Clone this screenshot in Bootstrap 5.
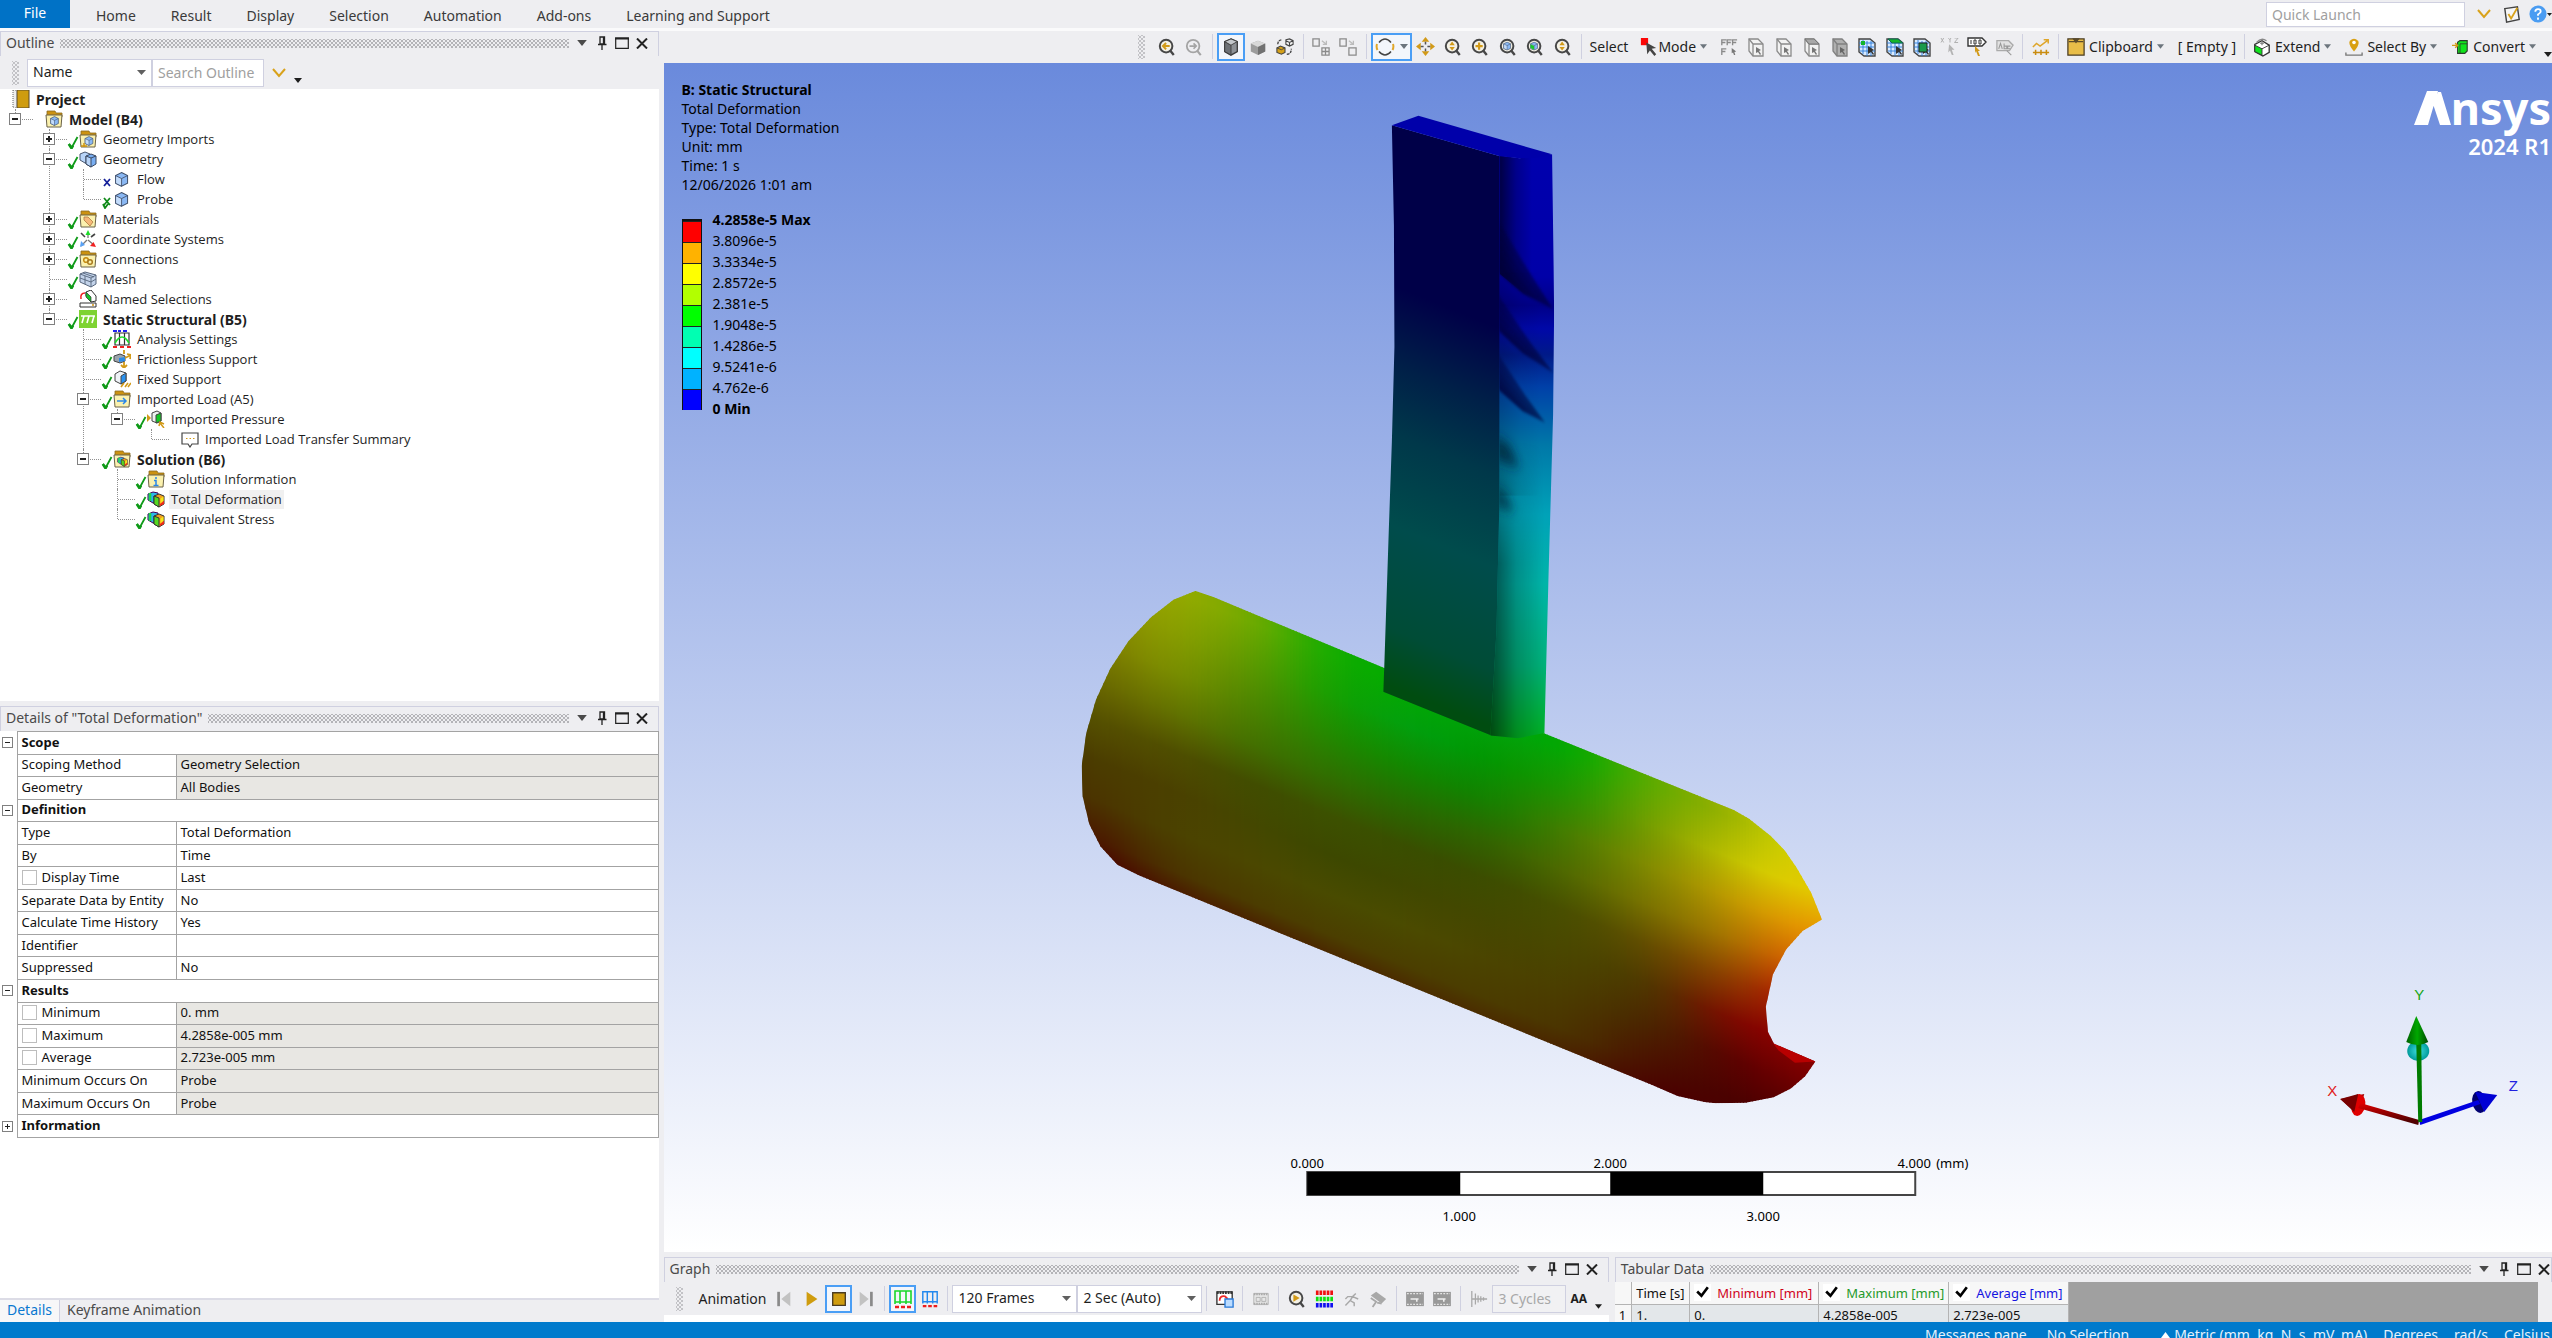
<!DOCTYPE html>
<html lang="en">
<head>
<meta charset="utf-8">
<meta name="viewport" content="width=device-width, initial-scale=1">
<title>Static Structural - Mechanical</title>
<link href="https://cdn.jsdelivr.net/npm/bootstrap@5.3.0/dist/css/bootstrap.min.css" rel="stylesheet">
<style>
:root { --chrome:#eeeef1; --edge:#cfd0e0; --gold:#cc9a10; --sel:#4a9ef5; }
body { font-family:"Noto Sans","Open Sans",sans-serif; font-size:14px; line-height:20px; color:#1e1e1e; background:var(--chrome); }
svg { display:block; flex:none; }
button { border:0; background:none; padding:0; color:inherit; }
.ribbon { height:28px; }
.ribbon nav { padding-left:8px; }
.ribbon-line { height:3px; background:#fafafb; flex:none; }
.file-btn { width:70px; background:#0072c6; color:#fff; padding-bottom:2px; }
.menu-btn { padding:3px 17px 0 18px; color:#3a3a3a; }
.quick { width:199px; height:25px; margin-top:1px; }
.field { border:1px solid var(--edge); background-color:#fff; border-radius:0; padding:0 5px 1px; font-size:14px; line-height:20px; color:#1e1e1e; outline:0; }
.field::placeholder { color:#a0a0a0; opacity:1; }
select.field { appearance:none; background-image:url("data:image/svg+xml,%3Csvg xmlns='http://www.w3.org/2000/svg' viewBox='0 0 9 5'%3E%3Cpath fill='%23606060' d='M0 0h9L4.500 5z'/%3E%3C/svg%3E"); background-repeat:no-repeat; background-size:9px 5px; background-position:right 5px center; }
.left-col { width:26%; padding-right:5px; gap:5px; }
.outline-pane { flex:335 1 0; min-height:0; }
.details-pane { flex:308 1 0; min-height:0; }
.pane-title { height:25px; border:1px solid var(--edge); border-bottom:0; padding:0 9px 2px 5px; color:#4a4a4a; flex:none; }
.dots { height:9px; margin:1px 0 0 6px; flex:1; background-image:radial-gradient(circle,#b4b4b8 0 1px,transparent 1px),radial-gradient(circle,#b4b4b8 0 1px,transparent 1px); background-size:4px 4px; background-position:0 0,2px 2px; }
.grip { width:7px; height:24px; flex:none; background-image:radial-gradient(circle,#c2c2c6 0 1px,transparent 1px),radial-gradient(circle,#c2c2c6 0 1px,transparent 1px); background-size:4px 4px; background-position:0 0,2px 2px; }
.title-btn { width:14px; height:20px; margin-left:6px; display:flex; align-items:center; justify-content:center; }
.search-row { height:33px; padding-left:12px; flex:none; }
.search-field { height:28px; width:112px; }
.anim-select { width:125px; height:28px; }
.tree-box { background:#fff; }
.tree, .tree ul { list-style:none; margin:0; padding:0; }
.tree { font-family:"Open Sans","Noto Sans",sans-serif; font-size:13px; }
.tree .fw-bold { font-size:14px; font-family:"Noto Sans","Open Sans",sans-serif; }
.tree ul { padding-left:34px; }
.tree > li > ul { padding-left:0; }
.tree li { position:relative; }
.tree li li::before { content:""; position:absolute; left:15px; top:0; bottom:0; border-left:1px dotted #909090; }
.tree li li:last-child::before { bottom:auto; height:10px; }
.tree-row { display:flex; align-items:center; height:20px; padding-left:9px; white-space:nowrap; }
.root-row { padding-left:12px; }
.twig { width:12px; height:12px; margin-right:1px; position:relative; z-index:1; border:1px solid #808080; background:#fff; flex:none; padding:0; }
.twig::before { content:""; position:absolute; left:2px; top:4px; width:6px; height:2px; background:#222; }
.twig.plus::after { content:""; position:absolute; left:4px; top:2px; width:2px; height:6px; background:#222; }
.dash { width:11px; border-top:1px dotted #909090; flex:none; }
.leaf-gap { width:7px; flex:none; }
.leaf-dash { width:17px; }
.mark-slot { width:12px; height:20px; flex:none; padding-top:6px; }
.node-name { margin-left:4px; padding:0 2px; line-height:19px; }
.node-on { background:#f0f0f0; }
.details-box { background:#fff; }
.prop-table { width:100%; height:407px; border-collapse:collapse; font-size:13px; line-height:16px; table-layout:fixed; color:#111; }
.prop-table th, .prop-table td { border:1px solid #a3a3a3; padding:0 4px 2px; white-space:nowrap; font-weight:400; text-align:left; }
.prop-table .tw { border:0; padding:0 0 0 2px; width:17px; }
.prop-table .grp { font-weight:700; }
.prop-table .ro { background:#e8e7e3; }
.prop-table .twig { width:11px; height:11px; display:block; }
.prop-table .twig::before { top:4px; height:1px; left:2px; width:5px; }
.prop-table .twig.plus::after { width:1px; height:5px; }
.twig-col { width:17px; }
.key-col { width:159px; }
.tick { appearance:none; width:15px; height:15px; margin:0 5px 0 0; border:1px solid #bdbdbd; background:#fff; vertical-align:-3px; }
.foot-tabs { height:24px; border-top:2px solid #dcdce6; flex:none; }
.foot-tab { padding:0 7px 2px; color:#4a4a4a; }
.foot-tab.on { background:#f7f7f8; color:#0a78d0; border-right:1px solid var(--edge); }
.toolbar-main { height:32px; flex:none; padding-bottom:1px; }
.tb { width:27px; height:28px; display:flex; align-items:center; justify-content:center; flex:none; }
.tb-wide { width:28px; }
.tb.picked, .pick-wide { border:2px solid var(--sel); background:#f3f6fb; }
.pick-wide { width:41px; height:28px; display:flex; align-items:center; justify-content:space-between; padding:0 2px; }
.vr-thin { width:1px; height:25px; background:var(--edge); margin:0 4px; flex:none; }
.txt-btn { display:flex; align-items:center; white-space:nowrap; flex:none; }
.far { margin-left:14px; }
.view3d { background:linear-gradient(#6a8adc,#ffffff); min-height:0; color:#000; }
.model-svg { position:absolute; inset:0; width:100%; height:100%; }
.hud { position:absolute; left:18px; top:17px; line-height:19px; }
.legend-row { margin-top:15px; }
.legend-bar { width:20px; margin-top:10px; border:1px solid #111; border-width:2px 1px; height:191px; }
.legend-bar span { display:block; height:21px; border-top:1px solid #222; }
.legend-labels { line-height:21px; margin-left:11px; }
.brand { position:absolute; right:0; top:20px; width:140px; height:80px; }
.bottom-row { height:70px; padding-top:5px; gap:6px; flex:none; }
.graph-pane { flex:945 1 0; min-width:0; }
.tabular-pane { flex:937 1 0; min-width:0; }
.anim-bar { height:33px; flex:none; padding-left:12px; }
.cycle-field { width:74px; height:28px; background:#f1f1f3; color:#a8a8a8; }
.aa-label { font-size:12px; }
.grid-box { background:#a0a0a0; margin-right:14px; overflow:hidden; }
.data-table { border-collapse:collapse; font-size:13px; line-height:18px; color:#111; }
.data-table th, .data-table td { border:1px solid #b4b4b4; border-width:0 1px 1px 0; font-weight:400; padding:0 4px; white-space:nowrap; height:22px; background:#e3e7ea; }
.data-table th { background:#f7f7f7; }
.data-table .c-min { color:#d0021b; } .data-table .c-max { color:#1f9a2a; } .data-table .c-avg { color:#1414e0; }
.data-check { appearance:none; width:17px; height:17px; margin:0 6px 0 0; background:#fff; vertical-align:-3px; border:0; background-image:url("data:image/svg+xml,%3Csvg xmlns='http://www.w3.org/2000/svg' viewBox='0 0 16 16'%3E%3Cpath fill='none' stroke='%23000' stroke-width='2.500' d='M3 7l4 4 6-8'/%3E%3C/svg%3E"); }
.status { height:16px; background:#007acc; color:#e6f2fb; line-height:26px; flex:none; gap:16px; white-space:nowrap; padding-right:2px; }
.status-up { margin:10px 4px 0 0; }
</style>
</head>
<body class="d-flex flex-column vh-100 overflow-hidden">

<svg width="0" height="0" class="position-absolute" aria-hidden="true">
<defs>
<symbol id="caret" viewBox="0 0 8 5"><path d="M0 0h8L4 5z" fill="currentColor"/></symbol>
<symbol id="chev" viewBox="0 0 14 10"><path d="M1 1l6 7 6-7" fill="none" stroke="#d9a21b" stroke-width="2"/></symbol>
<symbol id="pin" viewBox="0 0 10 14"><path d="M3 1h4.500v7H3zM1 8.500h8.500M5 9v5M6.500 1v7" fill="none" stroke="#222" stroke-width="1.300"/></symbol>
<symbol id="maxi" viewBox="0 0 14 12"><path d="M.7 1h12.600v10.300H.7z" fill="none" stroke="#222" stroke-width="1.200"/><path d="M0 1.500h14" stroke="#222" stroke-width="2"/></symbol>
<symbol id="close" viewBox="0 0 12 11"><path d="M1 .5l10 10M11 .5l-10 10" stroke="#222" stroke-width="2"/></symbol>
<symbol id="ok" viewBox="0 0 12 14"><path d="M2 9l2.500 4L10.500 2" fill="none" stroke="#0f9a18" stroke-width="1.800"/><path d="M1.800 9l2.700 4.200 1.500-2.600" fill="none" stroke="#0f9a18" stroke-width="2.600"/></symbol>
<symbol id="xblue" viewBox="0 0 12 14"><path d="M3 4l6 7M9 4l-6 7" stroke="#15209a" stroke-width="1.800"/></symbol>
<symbol id="xgreen" viewBox="0 0 12 14"><path d="M3 3l6 7M9 3l-6 7M2 9l2 4 3-4" fill="none" stroke="#0f8a18" stroke-width="1.800"/></symbol>
<symbol id="book" viewBox="0 0 18 18"><path d="M5 0h12v18H5z" fill="#cf9c0f" stroke="#5a4a2a"/><path d="M1 0h3.500v18H1z" fill="#eee" stroke="#666" stroke-dasharray="1 1"/></symbol>
<symbol id="folder" viewBox="0 0 18 18"><path d="M2 5V1h8l1 2h6v4H2z" fill="#cc9210" stroke="#8a6a20" stroke-width=".8"/><path d="M1 5h16l-1 12H2z" fill="#fbf1ae" stroke="#6a6248"/></symbol>
<symbol id="cube" viewBox="0 0 18 18"><path d="M9 1l7 3.500v9L9 17l-7-3.500v-9z" fill="#8ab8f4" stroke="#40506a" stroke-width="1.200"/><path d="M2 4.500L9 8v9l-7-3.500z" fill="#c3dcfb" stroke="#40506a"/><path d="M9 8l7-3.500" stroke="#40506a"/></symbol>
<symbol id="part" viewBox="-1 -2 21 21"><use href="#cube" width="18" height="18"/></symbol>
<symbol id="cubes" viewBox="0 0 18 18"><path d="M6 2l5 2v8l-5 1-5-3V4z" fill="#b8d4f8" stroke="#4a5870"/><path d="M12 4l5 2v8l-5 3-5-3V6z" fill="#79aef2" stroke="#3a4860"/><path d="M7 6l5 2v9l-5-3z" fill="#b8d4f8" stroke="#3a4860"/><path d="M12 8l5-2" stroke="#3a4860"/></symbol>
<symbol id="f-import" viewBox="0 0 18 18"><use href="#folder"/><use href="#cube" x="5" y="6" width="10" height="10"/><path d="M2 16h6M5 13v4" stroke="#cc9210" stroke-width="1.500"/></symbol>
<symbol id="f-model" viewBox="0 0 18 18"><use href="#folder"/><use href="#cube" x="4.500" y="6" width="10" height="10"/></symbol>
<symbol id="f-mat" viewBox="0 0 18 18"><use href="#folder"/><path d="M5 7l4 0 5 5-3 4-6-6z" fill="#f5b87a" stroke="#b07a40" stroke-width=".8"/></symbol>
<symbol id="axes" viewBox="0 0 18 18"><path d="M9 8V2M9 10l6 5M8 10l-6 6" stroke="#777" stroke-width="1.300"/><path d="M9 0l2.500 5h-5z" fill="#1ddc2a"/><path d="M17 17l-6-1 3.500-4z" fill="#f02020"/><path d="M1 17l1-6 4 4z" fill="#5aa2f5"/><path d="M2 3l4 4M16 4l-4 3" stroke="#444" stroke-width="1.600"/></symbol>
<symbol id="f-conn" viewBox="0 0 18 18"><use href="#folder"/><circle cx="7" cy="10" r="2.300" fill="none" stroke="#c58a10" stroke-width="1.500"/><circle cx="11" cy="12" r="2.300" fill="none" stroke="#a87a20" stroke-width="1.500"/></symbol>
<symbol id="mesh" viewBox="0 0 18 18"><path d="M6 2l11 3v9l-5 3L1 12V4z" fill="#c3d3ea" stroke="#56657c"/><path d="M1 4l11 4 5-3M12 8v9M6 6v8M1 8l11 4 5-3M4 3l11 4" fill="none" stroke="#56657c" stroke-width=".9"/></symbol>
<symbol id="named" viewBox="0 0 18 18"><path d="M7 2l5-2 5 6v5l-5 1-5-6z" fill="#fff" stroke="#333"/><path d="M7 2l5 5v5L7 7z" fill="#17c22a" stroke="#333" stroke-width=".7"/><path d="M2 9q-1-6 4-6" fill="none" stroke="#ee2020" stroke-width="1.500"/><path d="M1 13h16v4H1z" fill="#fff" stroke="#333"/><circle cx="14" cy="15" r="1" fill="#cc9210"/></symbol>
<symbol id="static" viewBox="0 0 18 18"><path d="M0 0h18v18H0z" fill="#7ed332"/><path d="M2 6h14M5 6l-2 7M10 6l-2 7M15 6l-2 7" stroke="#fff" stroke-width="1.600"/></symbol>
<symbol id="analysis" viewBox="0 0 18 18"><path d="M2 3h14v12H2zM6.500 3v12M11.500 3v12" fill="none" stroke="#333" stroke-width="1.200"/><path d="M2 13q7-12 14 0" fill="none" stroke="#1ddc2a" stroke-width="1.600"/><path d="M0 1h4M5 1h3M10 1h4" stroke="#2020ee" stroke-width="2"/><path d="M0 17h4M7 17h4M14 17h4" stroke="#ee2020" stroke-width="2"/></symbol>
<symbol id="friction" viewBox="0 0 18 18"><path d="M1 6l6-2 5 2v5l-5 2-6-2z" fill="#9aa4ac" stroke="#444"/><path d="M6 8l6-1v4l-6 1z" fill="#2a8ae8"/><path d="M11 0v4M11 12v6M8 15l3 3 3-3M12 8l6-3M14 4l4 1-1 4" fill="none" stroke="#d29a18" stroke-width="1.800"/></symbol>
<symbol id="fixed" viewBox="0 0 18 18"><path d="M2 4l5-3 6 2v8l-5 3-6-3z" fill="#eef2f6" stroke="#444"/><path d="M8 6l5-3v8l-5 3z" fill="#2a92f0" stroke="#444"/><path d="M8 17l3-4M12 17l3-4M15 17l3-4" stroke="#d29a18" stroke-width="1.600"/></symbol>
<symbol id="f-load" viewBox="0 0 18 18"><use href="#folder"/><path d="M4 11h9M10 8l3 3-3 3" fill="none" stroke="#2a86e8" stroke-width="1.500"/></symbol>
<symbol id="pressure" viewBox="0 0 18 18"><path d="M5 3l5-2 4 2v8l-4 2-5-2z" fill="#eef2f0" stroke="#444"/><path d="M9 5l5-2v8l-5 2z" fill="#13c926" stroke="#444"/><path d="M0 4l4 4-4 4z" fill="#d29a18"/><path d="M17 18l-4-5M12 16l1-4 4 2" fill="none" stroke="#d29a18" stroke-width="1.500"/></symbol>
<symbol id="note" viewBox="0 0 18 18"><path d="M1 3h16v11h-6l-2 3-2-3H1z" fill="#fff" stroke="#444" stroke-width="1.200"/><path d="M5 8.500h9" stroke="#d29a18" stroke-dasharray="1.500 2"/></symbol>
<symbol id="result" viewBox="0 0 18 18"><path d="M6 2l5 1v9l-5 1-5-3V4z" fill="#2db6e8" stroke="#405"/><path d="M3 3v8" stroke="#1fd64a" stroke-width="2.500"/><path d="M12 4l5 2v8l-5 3-5-3V6z" fill="#f0a020" stroke="#333"/><path d="M7 6l5 2v9l-5-3z" fill="#54d820" stroke="#333"/><path d="M13.500 8.500l3-2v4l-3 3z" fill="#f6e81a"/><path d="M13 14l4-3v3l-4 2z" fill="#ee2a1a"/></symbol>
<symbol id="f-sol" viewBox="0 0 18 18"><use href="#folder"/><use href="#result" x="4" y="6" width="11" height="11"/></symbol>
<symbol id="f-info" viewBox="0 0 18 18"><use href="#folder"/><path d="M9 7v2M7 10.500h2V15M6.500 15.500h5" fill="none" stroke="#2a86e8" stroke-width="1.500"/></symbol>

<symbol id="lens" viewBox="0 0 20 20"><circle cx="9" cy="9" r="7" fill="#f4f1e6" stroke="#474747" stroke-width="2.200"/><path d="M13.500 14l4 5" stroke="#474747" stroke-width="2.600"/></symbol>
<symbol id="z-back" viewBox="0 0 20 20"><use href="#lens"/><path d="M13 9H6M9 5.500L5.500 9 9 12.500" fill="none" stroke="#d29a18" stroke-width="2.200"/></symbol>
<symbol id="z-fwd" viewBox="0 0 20 20"><g fill="none" stroke="#a4a4a4"><circle cx="9" cy="9" r="7" stroke-width="2"/><path d="M13.500 14l4 5" stroke-width="2.400"/><path d="M5 9h7M9.500 6L12.500 9l-3 3" stroke-width="1.800"/></g></symbol>
<symbol id="z-pan" viewBox="0 0 20 20"><use href="#lens"/><path d="M9 4l3 4H6zM9 14l3-4H6z" fill="#d29a18"/></symbol>
<symbol id="z-plus" viewBox="0 0 20 20"><use href="#lens"/><path d="M9 5v8M5 9h8" stroke="#d29a18" stroke-width="2.400"/></symbol>
<symbol id="z-cube" viewBox="0 0 20 20"><use href="#lens"/><use href="#cube" x="4" y="4" width="10" height="10"/></symbol>
<symbol id="z-green" viewBox="0 0 20 20"><use href="#lens"/><use href="#cube" x="4" y="4" width="10" height="10"/><path d="M5 7l4 2v4l-4-2z" fill="#19c92c"/></symbol>
<symbol id="c-dark" viewBox="0 0 20 20"><path d="M10 1l7 3v11l-7 4-7-4V4z" fill="#8d9196" stroke="#3d3d3d" stroke-width="1.500"/><path d="M3 4l7 4v11l-7-4z" fill="#6d7176" stroke="#3d3d3d"/><path d="M10 8l7-4-7-3-7 3z" fill="#c4c8cc" stroke="#3d3d3d"/></symbol>
<symbol id="c-flat" viewBox="0 0 20 20"><path d="M2 6l8-3 8 3v9l-8 4-8-4z" fill="#9c9c9c"/><path d="M2 6l8-3 8 3-8 4z" fill="#d8d8d8"/><path d="M10 10l8-4v9l-8 4z" fill="#717171"/></symbol>
<symbol id="c-swap" viewBox="0 0 20 20"><path d="M11 2l4-1 4 2v4l-4 2-4-2zM11 3l4 2 4-2M15 5v4" fill="#f2f2f2" stroke="#444" stroke-width="1.200"/><path d="M1 11l4-2 5 2v5l-4 2-5-2z" fill="#d6a118" stroke="#444" stroke-width="1.200"/><path d="M1 11l5 2 4-2" fill="none" stroke="#444"/><path d="M2 7q0-5 5-5M12 18q5 0 5-6" fill="none" stroke="#444" stroke-width="1.500" stroke-dasharray="3 1"/></symbol>
<symbol id="sq-grid" viewBox="0 0 20 20"><g fill="none" stroke="#8a8a8a" stroke-width="1.400"><path d="M1 1h7v8H1zM11 11h8v8h-8zM15 11v8M11 15h8"/><path d="M11 3l5 4M16 3v4h-4" stroke="#bbb"/></g></symbol>
<symbol id="sq-one" viewBox="0 0 20 20"><g fill="none" stroke="#8a8a8a" stroke-width="1.400"><path d="M1 1h7v8H1zM11 11h8v8h-8z"/><path d="M11 3l5 4M16 3v4h-4" stroke="#bbb"/></g></symbol>
<symbol id="orbit" viewBox="0 0 20 20"><g fill="none" stroke="#444" stroke-width="1.500"><path d="M4 5.500Q10-1.500 16 5.500M16 14.500Q10 21.500 4 14.500"/></g><path d="M2 7q-1 3 .5 6M18 7q1 3-.5 6" fill="none" stroke="#e0a72a" stroke-width="2"/></symbol>
<symbol id="move" viewBox="0 0 20 20"><path d="M10 0l4 5H6zM10 20l4-5H6zM0 10l5-4v8zM20 10l-5-4v8z" fill="#d29a18"/><path d="M10 5v3M10 12v3M5 10h3M12 10h3" stroke="#555" stroke-width="1.600"/></symbol>
<symbol id="mode" viewBox="0 0 20 20"><path d="M1 0h8v8H1z" fill="#fb0606"/><path d="M7 5l11 6-5 1 5 6-2 2-5-6-3 4z" fill="#444"/></symbol>
<symbol id="filter" viewBox="0 0 20 20"><path d="M2 19V12h5M2 15h4M2 8V2h5M2 5h4M8 8V2h5M8 5h4M14 8V2h5M14 5h4" fill="none" stroke="#8a8a8a" stroke-width="1.500"/><path d="M13 11l5 4-2 .5 1 3.500h-1.500l-1-3-1.500 1z" fill="#777"/></symbol>
<symbol id="pick" viewBox="0 0 20 20"><path d="M3 2h9l5 5v12H7l-4-5z" fill="#f2f2f2" stroke="#8a8a8a" stroke-width="1.300"/><path d="M3 2l4 5h10M7 7v12" fill="none" stroke="#8a8a8a" stroke-width="1.300"/><path d="M10 10l5 3-2 1 2 3-1 1-2-3-2 1z" fill="#777"/></symbol>
<symbol id="pick-top" viewBox="0 0 20 20"><use href="#pick"/><path d="M3 2h9l5 5H7z" fill="#a8a8a8" stroke="#777"/></symbol>
<symbol id="pick-full" viewBox="0 0 20 20"><path d="M3 2h9l5 5v12H7l-4-5z" fill="#b0b0b0" stroke="#808080" stroke-width="1.300"/><path d="M3 2l4 5h10M7 7v12" fill="none" stroke="#808080" stroke-width="1.300"/><path d="M10 10l5 3-2 1 2 3-1 1-2-3-2 1z" fill="#666"/></symbol>
<symbol id="gridpick" viewBox="0 0 20 20"><path d="M2 2h11l5 4v13H7l-5-4z" fill="#d8eaff" stroke="#444" stroke-width="1.400"/><path d="M6 3v14M10 4v15M14 4v15M2 6h15M2 10h15M3 14h15" stroke="#2a7ad8" stroke-width=".9"/><path d="M11 9l6 4-2 1 2 3-1 1-2-3-3 2z" fill="#333"/></symbol>
<symbol id="g1" viewBox="0 0 20 20"><use href="#gridpick"/><path d="M4 4h4v4H4z" fill="#13b52a"/></symbol>
<symbol id="g2" viewBox="0 0 20 20"><use href="#gridpick"/><path d="M3 2h10l5 4H7z" fill="#13b52a" stroke="#165" /></symbol>
<symbol id="g3" viewBox="0 0 20 20"><use href="#gridpick"/><path d="M7 6h8v9H7z" fill="#1a9a4a" stroke="#222"/></symbol>
<symbol id="xyz" viewBox="0 0 20 20"><path d="M0 0l3 5M3 0L0 5M8 0l2 2 1-2M10 2v3M15 0h4l-4 5h4" fill="none" stroke="#b0b0b0" stroke-width="1.100"/><path d="M9 7l6 6-3 0 2 6h-2l-2-5-2 2z" fill="#b4b4b4"/></symbol>
<symbol id="tag" viewBox="0 0 20 20"><path d="M1 1h14l4 4-4 4H1z" fill="#fff" stroke="#333" stroke-width="1.400"/><path d="M4 3v4M7 3h2v4H7zM12 3h2v4h-2z" stroke="#333" fill="none"/><path d="M8 9l5 5-2 0 2 5h-2l-2-5-1 2z" fill="#d29a18"/></symbol>
<symbol id="tag-off" viewBox="0 0 20 20"><path d="M1 3h13l5 5-4 6H1z" fill="#e2e2e2" stroke="#aaa" stroke-width="1.400"/><path d="M3 12l2-6 2 6M9 6v6h3V9H9M16 9h-3v3h3M12 14l5 5" fill="none" stroke="#999" stroke-width="1.200"/></symbol>
<symbol id="trend" viewBox="0 0 20 20"><path d="M1 10l4-4 4 3 8-6M13 2h5v4" fill="none" stroke="#dfa62a" stroke-width="1.700"/><path d="M1 16h18M4 13v6M10 13v6M16 13v6" stroke="#c98c10" stroke-width="1.700"/></symbol>
<symbol id="clip" viewBox="0 0 20 20"><path d="M1 1h18v18H1z" fill="#e8bd48" stroke="#4a3c22" stroke-width="1.400"/><path d="M2 4h16M7 1h6l-3 4z" stroke="#5a4a2a" fill="#5a4a2a" stroke-width="1.200"/></symbol>
<symbol id="extend" viewBox="0 0 20 20"><path d="M10 3l8 5v8l-7 4-9-5V7z" fill="#fff" stroke="#333" stroke-width="1.500"/><path d="M2 8l8 4v7l-8-4z" fill="#0fe31c" stroke="#333"/><path d="M4 5q5-6 11-2M10 4v4M8 6h4" stroke="#888" fill="none" stroke-width="1.500"/><path d="M10 12l8-4" stroke="#333"/></symbol>
<symbol id="place" viewBox="0 0 20 20"><path d="M10 15Q3 7 5.500 3 10-1.500 14.500 3 17 7 10 15z" fill="#d9a012"/><circle cx="10" cy="5" r="2" fill="#fff"/><path d="M1 16v3h18v-3" fill="none" stroke="#777" stroke-width="1.500"/></symbol>
<symbol id="convert" viewBox="0 0 20 20"><path d="M7 4l3-2h9v13l-3 3H7z" fill="#0fe31c" stroke="#2b3b2b" stroke-width="1.400"/><path d="M10 6h9M10 6v12" stroke="#2b3b2b"/><path d="M0 8h7M4 5l3 3-3 3" fill="none" stroke="#d29a18" stroke-width="1.800"/></symbol>
<symbol id="doc" viewBox="0 0 20 20"><path d="M2 4l14-2 2 14-14 3z" fill="#f6f6f6" stroke="#444" stroke-width="1.600"/><path d="M6 10l3 5 7-12" fill="none" stroke="#d9a21b" stroke-width="2"/></symbol>
<symbol id="help" viewBox="0 0 20 20"><circle cx="10" cy="10" r="9.500" fill="#4a9cf2"/><path d="M7 7.500q0-3 3-3t3 2.500q0 2-3 3.500v1.500M10 14v2.500" fill="none" stroke="#fff" stroke-width="2"/></symbol>
<symbol id="a-prev" viewBox="0 0 20 20"><path d="M4 2v16" stroke="#8a8a8a" stroke-width="3"/><path d="M17 2v16L7 10z" fill="#c2c2c2"/></symbol>
<symbol id="a-next" viewBox="0 0 20 20"><path d="M16 2v16" stroke="#8a8a8a" stroke-width="3"/><path d="M3 2v16l10-8z" fill="#c2c2c2"/></symbol>
<symbol id="a-play" viewBox="0 0 20 20"><path d="M4 2v16l12-8z" fill="#cf9c0f"/></symbol>
<symbol id="a-stop" viewBox="0 0 20 20"><path d="M3 3h14v14H3z" fill="#cf9c0f" stroke="#4a3c22" stroke-width="1.500"/></symbol>
<symbol id="a-green" viewBox="0 0 20 20"><path d="M2 2h16v11H2zM7 2v13M13 2v13M2 13v2M18 13v2" fill="none" stroke="#19d82a" stroke-width="1.600"/><path d="M2 18h16" stroke="#ee1c1c" stroke-width="2.500" stroke-dasharray="4 2"/></symbol>
<symbol id="a-blue" viewBox="0 0 20 20"><path d="M2 2h16v11H2zM7 2v13M13 2v13M2 13v2M18 13v2" fill="none" stroke="#2288ee" stroke-width="1.600"/><path d="M2 18h16" stroke="#ee1c1c" stroke-width="2.500" stroke-dasharray="4 2"/></symbol>
<symbol id="a-film" viewBox="0 0 20 20"><path d="M1 2h17v14H1z" fill="#fff" stroke="#333" stroke-width="1.500"/><path d="M1 3h17" stroke="#333" stroke-width="3" stroke-dasharray="2 1"/><path d="M4 12q0-6 6-5l3 3" fill="none" stroke="#ee2a2a" stroke-width="2"/><path d="M10 10h9v9h-9z" fill="#bcdcff" stroke="#2a7ad8" stroke-width="1.500"/></symbol>
<symbol id="a-filmoff" viewBox="0 0 20 20"><path d="M1 3h18v14H1z" fill="#e6e6e6" stroke="#aaa"/><path d="M1 4h18M1 16h18" stroke="#aaa" stroke-width="2.500" stroke-dasharray="2 1"/><path d="M4 8h5v5H4zM11 8h5v5h-5z" fill="none" stroke="#aaa"/></symbol>
<symbol id="a-lens" viewBox="0 0 20 20"><use href="#lens"/><path d="M6 5v8l7-4z" fill="#d29a18"/></symbol>
<symbol id="a-rgb" viewBox="0 0 20 20"><g stroke-width="5" stroke-dasharray="3 1"><path d="M1 3h19" stroke="#f01010"/><path d="M1 10h19" stroke="#10e010"/><path d="M1 17h19" stroke="#1010f0"/></g></symbol>
<symbol id="a-run" viewBox="0 0 20 20"><path d="M16 3l-4 4H6l-3 3M12 7l-3 5 5 3v4M9 12l-6 6M12 7l7 3" fill="none" stroke="#a8a8a8" stroke-width="1.800"/></symbol>
<symbol id="a-cam" viewBox="0 0 20 20"><path d="M2 6l6-4 11 8-5 5z" fill="#a8a8a8"/><path d="M2 9l6 4-4 6M9 14l5 1" stroke="#a8a8a8" fill="none" stroke-width="2"/></symbol>
<symbol id="a-key" viewBox="0 0 20 18"><path d="M0 1h20v16H0z" fill="#999"/><path d="M1 3h18M1 15h18" stroke="#e6e6e6" stroke-width="1.500" stroke-dasharray="2 1.500"/><path d="M5 9h9M12 9v3" stroke="#eee" stroke-width="1.800"/></symbol>
<symbol id="a-wave" viewBox="0 0 20 20"><path d="M2 1v18M2 10h17M6 4v12M9 6v8M12 7v6M15 8v4" stroke="#a8a8a8" stroke-width="1.400"/></symbol>
</defs>
</svg>

<header class="d-flex ribbon flex-shrink-0">
  <button class="file-btn">File</button>
  <nav class="d-flex">
    <button class="menu-btn">Home</button><button class="menu-btn">Result</button><button class="menu-btn">Display</button><button class="menu-btn">Selection</button><button class="menu-btn">Automation</button><button class="menu-btn">Add-ons</button><button class="menu-btn">Learning and Support</button>
  </nav>
  <div class="d-flex align-items-center ms-auto gap-2">
    <input class="field quick" placeholder="Quick Launch" aria-label="Quick Launch">
    <button class="ms-1" aria-label="Expand"><svg width="14" height="10"><use href="#chev"/></svg></button>
    <button class="ms-1" aria-label="Options"><svg width="18" height="18"><use href="#doc"/></svg></button>
    <button class="d-flex align-items-center" aria-label="Help"><svg width="18" height="18"><use href="#help"/></svg><svg width="5" height="5"><use href="#caret"/></svg></button>
  </div>
</header>
<div class="ribbon-line"></div>

<main class="d-flex flex-grow-1 overflow-hidden">
  <div class="left-col d-flex flex-column flex-shrink-0">
    <section class="outline-pane d-flex flex-column">
      <div class="pane-title d-flex align-items-center"><span>Outline</span><span class="dots"></span>
        <button class="title-btn" aria-label="Menu"><svg width="10" height="6"><use href="#caret"/></svg></button><button class="title-btn" aria-label="Pin"><svg width="10" height="14"><use href="#pin"/></svg></button><button class="title-btn" aria-label="Maximize"><svg width="14" height="12"><use href="#maxi"/></svg></button><button class="title-btn" aria-label="Close"><svg width="12" height="11"><use href="#close"/></svg></button></div>
      <div class="search-row d-flex align-items-center">
        <span class="grip me-2"></span>
        <select class="field anim-select" aria-label="Filter by"><option>Name</option></select>
        <input class="field search-field" placeholder="Search Outline" aria-label="Search Outline">
        <button class="ms-2" aria-label="Expand"><svg width="14" height="10"><use href="#chev"/></svg></button>
        <svg class="ms-2 mt-3" width="8" height="5"><use href="#caret"/></svg>
      </div>
      <div class="tree-box flex-grow-1 overflow-hidden" id="outlineTree"></div>
    </section>

    <section class="details-pane d-flex flex-column">
      <div class="pane-title d-flex align-items-center"><span>Details of "Total Deformation"</span><span class="dots"></span>
        <button class="title-btn" aria-label="Menu"><svg width="10" height="6"><use href="#caret"/></svg></button><button class="title-btn" aria-label="Pin"><svg width="10" height="14"><use href="#pin"/></svg></button><button class="title-btn" aria-label="Maximize"><svg width="14" height="12"><use href="#maxi"/></svg></button><button class="title-btn" aria-label="Close"><svg width="12" height="11"><use href="#close"/></svg></button></div>
      <div class="details-box flex-grow-1 overflow-hidden">
        <table class="prop-table">
          <colgroup><col class="twig-col"><col class="key-col"><col></colgroup>
          <tbody>
          <tr><td class="tw"><button class="twig" aria-label="Collapse"></button></td><th class="grp" colspan="2">Scope</th></tr>
          <tr><td class="tw"></td><th>Scoping Method</th><td class="ro">Geometry Selection</td></tr>
          <tr><td class="tw"></td><th>Geometry</th><td class="ro">All Bodies</td></tr>
          <tr><td class="tw"><button class="twig" aria-label="Collapse"></button></td><th class="grp" colspan="2">Definition</th></tr>
          <tr><td class="tw"></td><th>Type</th><td>Total Deformation</td></tr>
          <tr><td class="tw"></td><th>By</th><td>Time</td></tr>
          <tr><td class="tw"></td><th><input class="tick" type="checkbox" id="k1"><label for="k1">Display Time</label></th><td>Last</td></tr>
          <tr><td class="tw"></td><th>Separate Data by Entity</th><td>No</td></tr>
          <tr><td class="tw"></td><th>Calculate Time History</th><td>Yes</td></tr>
          <tr><td class="tw"></td><th>Identifier</th><td></td></tr>
          <tr><td class="tw"></td><th>Suppressed</th><td>No</td></tr>
          <tr><td class="tw"><button class="twig" aria-label="Collapse"></button></td><th class="grp" colspan="2">Results</th></tr>
          <tr><td class="tw"></td><th><input class="tick" type="checkbox" id="k2"><label for="k2">Minimum</label></th><td class="ro">0. mm</td></tr>
          <tr><td class="tw"></td><th><input class="tick" type="checkbox" id="k3"><label for="k3">Maximum</label></th><td class="ro">4.2858e-005 mm</td></tr>
          <tr><td class="tw"></td><th><input class="tick" type="checkbox" id="k4"><label for="k4">Average</label></th><td class="ro">2.723e-005 mm</td></tr>
          <tr><td class="tw"></td><th>Minimum Occurs On</th><td class="ro">Probe</td></tr>
          <tr><td class="tw"></td><th>Maximum Occurs On</th><td class="ro">Probe</td></tr>
          <tr><td class="tw"><button class="twig plus" aria-label="Expand"></button></td><th class="grp" colspan="2">Information</th></tr>
          </tbody>
        </table>
      </div>
      <div class="foot-tabs d-flex"><button class="foot-tab on">Details</button><button class="foot-tab">Keyframe Animation</button></div>
    </section>
  </div>

  <div class="d-flex flex-column flex-grow-1 overflow-hidden">
    <div class="toolbar-main d-flex align-items-center justify-content-end" role="toolbar">
      <span class="grip me-2"></span>
      <button class="tb tb-wide" aria-label="Previous view"><svg width="18" height="18"><use href="#z-back"/></svg></button>
      <button class="tb" aria-label="Next view"><svg width="18" height="18"><use href="#z-fwd"/></svg></button>
      <span class="vr-thin"></span>
      <button class="tb tb-wide picked" aria-label="Shaded with edges"><svg width="18" height="18"><use href="#c-dark"/></svg></button>
      <button class="tb" aria-label="Shaded"><svg width="18" height="18"><use href="#c-flat"/></svg></button>
      <button class="tb" aria-label="Swap"><svg width="18" height="18"><use href="#c-swap"/></svg></button>
      <span class="vr-thin"></span>
      <button class="tb" aria-label="Show mesh"><svg width="18" height="18"><use href="#sq-grid"/></svg></button>
      <button class="tb" aria-label="Hide mesh"><svg width="18" height="18"><use href="#sq-one"/></svg></button>
      <span class="vr-thin"></span>
      <button class="pick-wide" aria-label="Rotate"><svg width="20" height="20"><use href="#orbit"/></svg><svg width="8" height="5" class="text-secondary"><use href="#caret"/></svg></button>
      <button class="tb tb-wide" aria-label="Pan"><svg width="19" height="19"><use href="#move"/></svg></button>
      <button class="tb" aria-label="Zoom"><svg width="18" height="18"><use href="#z-pan"/></svg></button>
      <button class="tb" aria-label="Box zoom"><svg width="18" height="18"><use href="#z-plus"/></svg></button>
      <button class="tb tb-wide" aria-label="Zoom to fit"><svg width="18" height="18"><use href="#z-cube"/></svg></button>
      <button class="tb" aria-label="Zoom to selection"><svg width="18" height="18"><use href="#z-green"/></svg></button>
      <button class="tb tb-wide" aria-label="Magnifier"><svg width="18" height="18"><use href="#z-pan"/></svg></button>
      <span class="vr-thin"></span>
      <span class="txt-btn mx-1">Select</span>
      <button class="txt-btn ms-2"><svg width="18" height="18"><use href="#mode"/></svg>Mode<svg width="7" height="5" class="ms-1 text-secondary"><use href="#caret"/></svg></button>
      <button class="tb ms-2" aria-label="Filter"><svg width="20" height="18"><use href="#filter"/></svg></button>
      <button class="tb tb-wide" aria-label="Vertex"><svg width="20" height="20"><use href="#pick"/></svg></button>
      <button class="tb tb-wide" aria-label="Edge"><svg width="20" height="20"><use href="#pick"/></svg></button>
      <button class="tb tb-wide" aria-label="Face"><svg width="20" height="20"><use href="#pick-top"/></svg></button>
      <button class="tb" aria-label="Body"><svg width="20" height="20"><use href="#pick-full"/></svg></button>
      <button class="tb tb-wide" aria-label="Node"><svg width="20" height="20"><use href="#g1"/></svg></button>
      <button class="tb" aria-label="Element face"><svg width="20" height="20"><use href="#g2"/></svg></button>
      <button class="tb tb-wide" aria-label="Element"><svg width="20" height="20"><use href="#g3"/></svg></button>
      <button class="tb" aria-label="Coordinates"><svg width="20" height="18"><use href="#xyz"/></svg></button>
      <button class="tb tb-wide" aria-label="Probe"><svg width="20" height="20"><use href="#tag"/></svg></button>
      <button class="tb" aria-label="Label"><svg width="20" height="18"><use href="#tag-off"/></svg></button>
      <span class="vr-thin"></span>
      <button class="tb" aria-label="Chart"><svg width="18" height="18"><use href="#trend"/></svg></button>
      <span class="vr-thin"></span>
      <button class="txt-btn gap-1 ms-1"><svg width="18" height="18"><use href="#clip"/></svg>Clipboard<svg width="7" height="5" class="text-secondary"><use href="#caret"/></svg></button>
      <span class="txt-btn far">[ Empty ]</span>
      <span class="vr-thin ms-2"></span>
      <button class="txt-btn gap-1 ms-1"><svg width="18" height="20"><use href="#extend"/></svg>Extend<svg width="7" height="5" class="text-secondary"><use href="#caret"/></svg></button>
      <button class="txt-btn gap-1 far"><svg width="18" height="18"><use href="#place"/></svg>Select By<svg width="7" height="5" class="text-secondary"><use href="#caret"/></svg></button>
      <button class="txt-btn gap-1 far"><svg width="18" height="16"><use href="#convert"/></svg>Convert<svg width="7" height="5" class="text-secondary"><use href="#caret"/></svg></button>
      <svg class="ms-2 mt-3" width="8" height="5"><use href="#caret"/></svg>
    </div>

    <div class="view3d position-relative flex-grow-1 overflow-hidden">
      <svg class="model-svg" viewBox="664 63 1888 1189" role="img" aria-label="Total deformation plot">
        <defs>
          <clipPath id="bodyClip"><path d="M265 741L300 750 635 855 949 952 1320 1065 1350 1078 1392 1103 1420 1125 1443 1150 1472 1188 1493 1227 1455 1244 1423 1271 1397 1308 1383 1356 1387 1393 1399 1411 1480 1437 1460 1459 1432 1477 1398 1490 1343 1498 1285 1499 1263 1497 1210 1488 1158 1471 430 1247 155 1162 112 1146 79 1119 57 1086 44 1045 42 1000 51 951 70 902 98 856 134 815 178 780 222 754Z"/></clipPath>
          <clipPath id="faceClip"><path d="M650 52L862 98V955H845L633 890 635 855 644 650 650 520 655 380 654 200Z"/></clipPath>
          <clipPath id="sideClip"><path d="M861 97L900 101 964 95 967 260 968 330 966 480 957 720 949 951 897 959 843 955 855 800 861 600Z"/></clipPath>
          <linearGradient id="faceGrad" gradientUnits="userSpaceOnUse" x1="0" y1="-150" x2="0" y2="700">
            <stop offset="0" stop-color="#000048"/><stop offset=".28" stop-color="#000048"/><stop offset=".42" stop-color="#002048"/><stop offset=".54" stop-color="#00384a"/><stop offset=".7" stop-color="#004c4c"/><stop offset=".88" stop-color="#004c36"/><stop offset=".98" stop-color="#004c10"/>
          </linearGradient>
          <linearGradient id="sideGrad" gradientUnits="userSpaceOnUse" x1="0" y1="95" x2="0" y2="955">
            <stop offset="0" stop-color="#0000ae"/><stop offset=".21" stop-color="#0000a8"/><stop offset=".26" stop-color="#000088"/><stop offset=".3" stop-color="#0008a8"/><stop offset=".345" stop-color="#001a88"/><stop offset=".4" stop-color="#0040a8"/><stop offset=".5" stop-color="#0078a8"/><stop offset=".62" stop-color="#00a2b8"/><stop offset=".74" stop-color="#00b4a8"/><stop offset=".88" stop-color="#00b078"/><stop offset="1" stop-color="#00b024"/>
          </linearGradient>
          <linearGradient id="sideShade"><stop offset="0" stop-color="#000" stop-opacity=".6"/><stop offset=".45" stop-color="#000" stop-opacity=".2"/><stop offset=".9" stop-color="#000" stop-opacity="0"/></linearGradient>
          <linearGradient id="fadeDown" x1="0" y1="0" x2="0" y2="1"><stop offset="0" stop-color="#fff" stop-opacity="0"/><stop offset=".4" stop-color="#fff"/></linearGradient>
          <mask id="lowMask" maskUnits="userSpaceOnUse" x="840" y="520" width="130" height="450"><rect x="840" y="520" width="130" height="450" fill="url(#fadeDown)"/></mask>
          <linearGradient id="streak" x1=".75" y1=".1" x2=".25" y2=".75"><stop offset=".1" stop-color="#000038" stop-opacity="0"/><stop offset="1" stop-color="#000038" stop-opacity=".9"/></linearGradient>
          <filter id="soft" x="-30%" y="-30%" width="160%" height="160%"><feGaussianBlur stdDeviation="2"/></filter>
          <filter id="softer" x="-50%" y="-50%" width="200%" height="200%"><feGaussianBlur stdDeviation="8"/></filter>
          <linearGradient id="armX" x1="0" y1="0" x2=".3" y2="1"><stop stop-color="#e00000"/><stop offset="1" stop-color="#500000"/></linearGradient>
          <linearGradient id="coneY"><stop stop-color="#006000"/><stop offset=".5" stop-color="#00a800"/><stop offset="1" stop-color="#004800"/></linearGradient>
          <radialGradient id="ball"><stop stop-color="#3fe0e0"/><stop offset="1" stop-color="#009a9a"/></radialGradient>
        </defs>
        <svg x="1060" y="90" width="800" height="1060" viewBox="0 0 1568 1568" preserveAspectRatio="none">
          <g clip-path="url(#bodyClip)"><g id="bodyField" transform="matrix(1 .307 0 1 0 0)"></g></g>
          <path d="M1397 1410L1480 1437 1440 1439 1408 1421Z" fill="#b80000"/>
          <g clip-path="url(#faceClip)"><rect x="600" y="-200" width="300" height="950" fill="url(#faceGrad)" transform="matrix(1 .307 0 1 0 0)"/></g>
          <g clip-path="url(#sideClip)">
            <rect x="840" y="90" width="130" height="880" fill="url(#sideGrad)"/>
            <rect x="840" y="520" width="120" height="440" fill="url(#sideShade)" mask="url(#lowMask)"/>
            <path d="M862 90H932V316L862 272Z" fill="url(#sideShade)"/>
            <rect x="862" y="270" width="90" height="330" fill="url(#sideShade)" opacity=".3"/>
            <g filter="url(#soft)" fill="url(#streak)">
              <path d="M856 190L856 268 906 301 966 324 920 270Z"/>
              <path d="M856 300L856 354 906 389 966 418 920 372Z"/>
              <path d="M856 388L856 441 906 475 950 492 910 450Z"/>
            </g>
            <g filter="url(#softer)" fill="#00283c">
              <path d="M850 510L850 545 900 560 880 525Z" opacity=".8"/>
              <path d="M850 585L850 615 890 625 875 600Z" opacity=".7"/>
            </g>
          </g>
          <path d="M650 52L702 38 964 95 940 100 900 101 862 98Z" fill="#0000aa"/>
        </svg>
        <g>
          <rect x="1307" y="1172" width="608" height="23" fill="#fff" stroke="#444" stroke-width="2"/>
          <rect x="1307" y="1172" width="153" height="23"/><rect x="1610" y="1172" width="153" height="23"/>
          <g font-size="13" text-anchor="middle"><text x="1307" y="1168">0.000</text><text x="1610" y="1168">2.000</text><text x="1914" y="1168">4.000</text><text x="1952" y="1168">(mm)</text><text x="1459" y="1221">1.000</text><text x="1763" y="1221">3.000</text></g>
        </g>
        <g>
          <path d="M2340 1099L2364 1094 2358 1115Z" fill="#a00000"/><ellipse cx="2358" cy="1105" rx="7" ry="11" fill="#e00000" transform="rotate(10 2358 1105)"/><path d="M2340 1099L2358 1094 2354 1112Z" fill="#780000"/>
          <path d="M2360 1103L2419 1120 2418 1125 2358 1108Z" fill="url(#armX)"/>
          <ellipse cx="2479" cy="1102" rx="7" ry="11" fill="#000070" transform="rotate(-10 2479 1102)"/><path d="M2475 1092L2497 1095 2484 1112Z" fill="#0000d4"/>
          <path d="M2419 1120L2478 1100 2480 1104 2420 1125Z" fill="#0000e0"/>
          <ellipse cx="2418" cy="1051" rx="11" ry="10" fill="url(#ball)"/>
          <path d="M2416 1042h5l1 80h-4z" fill="#007c00"/>
          <path d="M2416 1016L2428 1042Q2417 1048 2406 1042Z" fill="url(#coneY)"/>
          <g font-size="15" text-anchor="middle" font-family="Liberation Sans, sans-serif"><text x="2419" y="1000" fill="#14a514">Y</text><text x="2332" y="1096" fill="#e02020">X</text><text x="2513" y="1091" fill="#2020e0">Z</text></g>
        </g>
      </svg>
      <div class="hud">
        <strong>B: Static Structural</strong><br>Total Deformation<br>Type: Total Deformation<br>Unit: mm<br>Time: 1 s<br>12/06/2026 1:01 am
        <div class="d-flex legend-row">
          <div class="legend-bar" id="legendBar"></div>
          <div class="legend-labels"><strong>4.2858e-5 Max</strong><br>3.8096e-5<br>3.3334e-5<br>2.8572e-5<br>2.381e-5<br>1.9048e-5<br>1.4286e-5<br>9.5241e-6<br>4.762e-6<br><strong>0 Min</strong></div>
        </div>
      </div>
      <svg class="brand" viewBox="2412 83 140 80" role="img" aria-label="Ansys 2024 R1">
        <path d="M2427 91h11L2428 125h-14zM2438 92L2441 92 2451 125H2440L2433 104z" fill="#fff"/>
        <text x="2551" y="125" font-size="45" font-weight="700" text-anchor="end" fill="#fff">nsys</text>
        <text x="2551" y="155" font-size="22" font-weight="600" text-anchor="end" fill="#fff">2024 R1</text>
      </svg>
    </div>

    <div class="bottom-row d-flex">
      <section class="graph-pane d-flex flex-column">
        <div class="pane-title d-flex align-items-center"><span>Graph</span><span class="dots"></span>
          <button class="title-btn" aria-label="Menu"><svg width="10" height="6"><use href="#caret"/></svg></button><button class="title-btn" aria-label="Pin"><svg width="10" height="14"><use href="#pin"/></svg></button><button class="title-btn" aria-label="Maximize"><svg width="14" height="12"><use href="#maxi"/></svg></button><button class="title-btn" aria-label="Close"><svg width="12" height="11"><use href="#close"/></svg></button></div>
        <div class="anim-bar d-flex align-items-center">
          <span class="grip me-3"></span><span>Animation</span>
          <button class="tb tb-wide ms-1" aria-label="First"><svg width="18" height="18"><use href="#a-prev"/></svg></button>
          <button class="tb" aria-label="Play"><svg width="20" height="18"><use href="#a-play"/></svg></button>
          <button class="tb picked" aria-label="Stop"><svg width="18" height="18"><use href="#a-stop"/></svg></button>
          <button class="tb tb-wide" aria-label="Last"><svg width="18" height="18"><use href="#a-next"/></svg></button>
          <span class="vr-thin"></span>
          <button class="tb picked" aria-label="Distributed"><svg width="20" height="20"><use href="#a-green"/></svg></button>
          <button class="tb" aria-label="Result sets"><svg width="18" height="20"><use href="#a-blue"/></svg></button>
          <span class="vr-thin ms-1"></span>
          <select class="field anim-select" aria-label="Frames"><option>120 Frames</option></select>
          <select class="field anim-select" aria-label="Duration"><option>2 Sec (Auto)</option></select>
          <span class="vr-thin"></span>
          <button class="tb" aria-label="Export video"><svg width="18" height="18"><use href="#a-film"/></svg></button>
          <span class="vr-thin"></span>
          <button class="tb" aria-label="Snapshots"><svg width="18" height="16"><use href="#a-filmoff"/></svg></button>
          <span class="vr-thin mx-1"></span>
          <button class="tb" aria-label="Zoom"><svg width="18" height="18"><use href="#a-lens"/></svg></button>
          <button class="tb" aria-label="Contours"><svg width="18" height="18"><use href="#a-rgb"/></svg></button>
          <button class="tb" aria-label="Motion"><svg width="18" height="16"><use href="#a-run"/></svg></button>
          <button class="tb tb-wide" aria-label="Camera"><svg width="18" height="18"><use href="#a-cam"/></svg></button>
          <span class="vr-thin"></span>
          <button class="tb" aria-label="Keyframe"><svg width="18" height="16"><use href="#a-key"/></svg></button>
          <button class="tb tb-wide" aria-label="Keyframe edit"><svg width="18" height="16"><use href="#a-key"/></svg></button>
          <span class="vr-thin"></span>
          <button class="tb" aria-label="Cycles"><svg width="18" height="18"><use href="#a-wave"/></svg></button>
          <input class="field cycle-field" value="3 Cycles" aria-label="Cycles count" disabled>
          <strong class="ms-1 aa-label">AA</strong>
          <svg class="ms-2 mt-3" width="7" height="5"><use href="#caret"/></svg>
        </div>
        <div class="bg-white flex-grow-1"></div>
      </section>
      <section class="tabular-pane d-flex flex-column">
        <div class="pane-title d-flex align-items-center pe-0"><span>Tabular Data</span><span class="dots"></span>
          <button class="title-btn" aria-label="Menu"><svg width="10" height="6"><use href="#caret"/></svg></button><button class="title-btn" aria-label="Pin"><svg width="10" height="14"><use href="#pin"/></svg></button><button class="title-btn" aria-label="Maximize"><svg width="14" height="12"><use href="#maxi"/></svg></button><button class="title-btn" aria-label="Close"><svg width="12" height="11"><use href="#close"/></svg></button></div>
        <div class="grid-box flex-grow-1">
          <table class="data-table">
            <colgroup><col width="17"><col width="58"><col width="129"><col width="130"><col width="120"></colgroup>
            <tr><th></th><th>Time [s]</th><th class="c-min"><input type="checkbox" class="data-check" id="c1" checked><label for="c1">Minimum [mm]</label></th><th class="c-max"><input type="checkbox" class="data-check" id="c2" checked><label for="c2">Maximum [mm]</label></th><th class="c-avg"><input type="checkbox" class="data-check" id="c3" checked><label for="c3">Average [mm]</label></th></tr>
            <tr><th>1</th><td>1.</td><td>0.</td><td>4.2858e-005</td><td>2.723e-005</td></tr>
          </table>
        </div>
      </section>
    </div>
  </div>
</main>

<footer class="status d-flex justify-content-end overflow-hidden">
  <span class="me-1">Messages pane</span><span class="me-3">No Selection</span>
  <span class="d-flex"><svg class="status-up" width="9" height="6" viewBox="0 0 9 6"><path d="M0 6h9L4.500 0z" fill="#fff"/></svg>Metric (mm, kg, N, s, mV, mA)</span>
  <span>Degrees</span><span>rad/s</span><span>Celsius</span>
</footer>

<script src="https://cdn.jsdelivr.net/npm/bootstrap@5.3.0/dist/js/bootstrap.bundle.min.js"></script>
<script>
// Outline tree: [name, icon, mark, state, children]
const T = ['Project','book','','',[
  ['Model (B4)','f-model','','-',[
    ['Geometry Imports','f-import','ok','+'],
    ['Geometry','cubes','ok','-',[['Flow','part','xblue',''],['Probe','part','xgreen','']]],
    ['Materials','f-mat','ok','+'],
    ['Coordinate Systems','axes','ok','+'],
    ['Connections','f-conn','ok','+'],
    ['Mesh','mesh','ok',''],
    ['Named Selections','named','','+'],
    ['Static Structural (B5)','static','ok','-',[
      ['Analysis Settings','analysis','ok',''],
      ['Frictionless Support','friction','ok',''],
      ['Fixed Support','fixed','ok',''],
      ['Imported Load (A5)','f-load','ok','-',[
        ['Imported Pressure','pressure','ok','-',[['Imported Load Transfer Summary','note','','']]]
      ]],
      ['Solution (B6)','f-sol','ok','-',[
        ['Solution Information','f-info','ok',''],
        ['Total Deformation','result','ok',''],
        ['Equivalent Stress','result','ok','']
      ]]
    ]]
  ]]
]];
const boldNames = ['Project','Model (B4)','Static Structural (B5)','Solution (B6)'];
function nodeHtml(n, root) {
  const [name, icon, mark, state, kids] = n;
  const twig = root ? '' : state
    ? `<button class="twig ${state === '+' ? 'plus' : ''}" aria-label="Toggle ${name}"></button><span class="dash"></span>`
    : '<span class="leaf-gap"></span><span class="dash leaf-dash"></span>';
  const slot = root ? '' : `<span class="mark-slot">${mark ? `<svg width="12" height="14"><use href="#${mark}"/></svg>` : ''}</span>`;
  const cls = (boldNames.includes(name) ? ' fw-bold' : '') + (name === 'Total Deformation' ? ' node-on' : '');
  return `<li><div class="tree-row${root ? ' root-row' : ''}">${twig}${slot}<svg width="18" height="18"><use href="#${icon}"/></svg><span class="node-name${cls}">${name}</span></div>${kids ? `<ul>${kids.map(k => nodeHtml(k)).join('')}</ul>` : ''}</li>`;
}
document.getElementById('outlineTree').innerHTML = `<ul class="tree">${nodeHtml(T, true)}</ul>`;

// Legend bands, maximum first
document.getElementById('legendBar').innerHTML =
  ['#ff0000','#ffb200','#ffff00','#b2ff00','#00ff00','#00ffb2','#00ffff','#00b2ff','#0000ff']
  .map(c => `<span style="background:${c}"></span>`).join('');

// Contour field on the body: columns run along its axis, rows go round it
const colX = [59,216,372,529,686,843,1000,1156,1313,1400,1470];
const rowY = [673,732,792,851,910,969,1028,1087,1117];
const field = [
  '9a9c00 8c8c00 807c00 6c6800 565000 4b3c00 4b3200 4b1400 4b0000',
  '9aaa00 8ea000 7e9000 667400 504e00 4b4000 4b4200 4b3400 4b1c00',
  '74aa00 5f9800 4d8400 427000 404c00 444800 4b4700 4b3c00 4b2200',
  '10ac00 12a000 1f8a00 2e7000 3c5200 3c4800 484b00 4b3e00 4b2800',
  '00aa00 00a010 108800 266a00 384e00 404800 4b4b00 4b3e00 4b2c00',
  '00a410 009600 128000 306400 3c4c00 444800 4b4400 4b3c00 4b2c00',
  '00a800 209400 487c00 526a00 4a5000 4b4800 4b3e00 4b3400 4b2400',
  '60aa00 789c00 848c00 7c7400 644e00 4e3800 4a2400 4b0c00 4b0000',
  '9cb000 c0c000 c09c00 a87800 904000 800800 5a0000 4b0000 4b0000',
  'c8d000 dcd200 dc9c00 cc5c00 a82000 880000 6a0000 4e0000 4b0000',
  'd8d000 e4c400 e89000 dc6000 b40000 900000 700000 500000 4b0000'
].map(r => r.split(' ').map(h => [0,2,4].map(i => parseInt(h.substr(i,2),16))));
function sample(x, r) {
  let i = 0;
  while (i < colX.length - 2 && x > colX[i+1]) i++;
  const t = Math.min(1, Math.max(0, (x - colX[i]) / (colX[i+1] - colX[i])));
  return field[i][r].map((v, k) => v + (field[i+1][r][k] - v) * t);
}
// average over a window along the axis so the columns blend without a seam
function blended(x, r) {
  const sum = [0,0,0];
  for (let d = -60; d <= 60; d += 15) sample(x + d, r).forEach((v, k) => sum[k] += v / 9);
  return sum.map(Math.round);
}
let defs = '', bars = '';
const step = 6;
for (let x = 36; x < 1500; x += step) {
  const stops = rowY.map((y, r) => `<stop offset="${(y-673)/444}" stop-color="rgb(${blended(x, r)})"/>`).join('');
  defs += `<linearGradient id="b${x}" gradientUnits="userSpaceOnUse" x1="0" y1="673" x2="0" y2="1117">${stops}</linearGradient>`;
  bars += `<rect x="${x}" y="560" width="${step+2}" height="640" fill="url(#b${x})"/>`;
}
document.getElementById('bodyField').innerHTML = `<defs>${defs}</defs>${bars}`;
</script>
</body>
</html>
